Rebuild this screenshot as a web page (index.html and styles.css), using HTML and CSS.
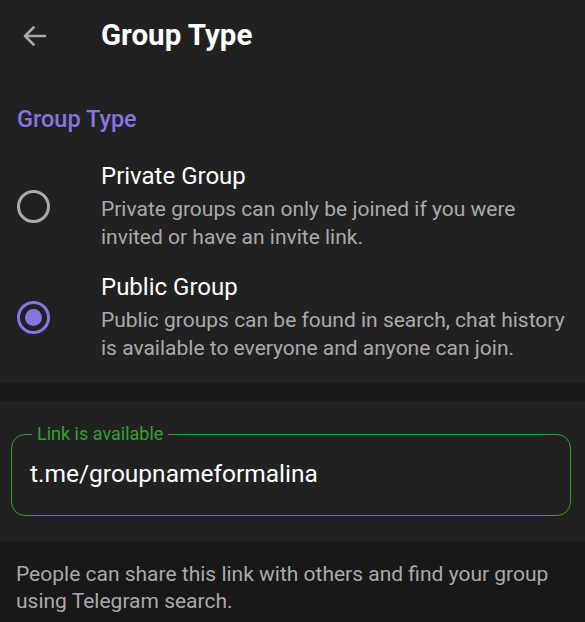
FILE: index.html
```html
<!DOCTYPE html>
<html>
<head>
<meta charset="utf-8">
<link rel="stylesheet" href="styles.css">
</head>
<body>
<div class="page">
  <header class="topbar">
    <span class="back">
      <svg width="26" height="24" viewBox="0 0 26 24"><path d="M24 12H4M12.5 3.5L4 12l8.5 8.5" fill="none" stroke="#aaaaaa" stroke-width="2.6" stroke-linecap="round" stroke-linejoin="round"/></svg>
    </span>
    <h1 class="title">Group Type</h1>
  </header>
  <section class="types">
    <h2 class="section-title">Group Type</h2>
    <div class="option">
      <span class="radio"></span>
      <div class="option-text">
        <div class="option-title">Private Group</div>
        <div class="option-desc">Private groups can only be joined if you were invited or have an invite link.</div>
      </div>
    </div>
    <div class="option">
      <span class="radio checked"></span>
      <div class="option-text">
        <div class="option-title">Public Group</div>
        <div class="option-desc">Public groups can be found in search, chat history is available to everyone and anyone can join.</div>
      </div>
    </div>
  </section>
  <div class="gap"></div>
  <section class="link">
    <fieldset class="field">
      <legend class="field-label">Link is available</legend>
      <div class="field-value">t.me/groupnameformalina</div>
    </fieldset>
  </section>
  <footer class="hint">People can share this link with others and find your group using Telegram search.</footer>
</div>
</body>
</html>
```
FILE: styles.css
```css
html, body {
  margin: 0;
  padding: 0;
  background: #181818;
}
body {
  font-family: Roboto, "Noto Sans", sans-serif;
  color: #ffffff;
}
.page {
  width: 585px;
  height: 622px;
  overflow: hidden;
  display: flex;
  flex-direction: column;
}
.topbar {
  display: flex;
  align-items: center;
  height: 72px;
  flex: none;
  background: #212121;
}
.back {
  display: flex;
  width: 26px;
  height: 24px;
  margin-left: 21px;
}
.title {
  margin: 0 0 0 54px;
  font-size: 29.5px;
  font-weight: 700;
  line-height: 1;
}
.types {
  flex: none;
  background: #212121;
  padding: 32px 0 11px;
}
.section-title {
  margin: 0 0 16px 17px;
  font-size: 23.5px;
  font-weight: 500;
  color: #8774e1;
  line-height: 30px;
}
.option {
  display: flex;
  align-items: center;
  padding: 11px 0 10px;
}
.radio {
  box-sizing: border-box;
  width: 33px;
  height: 33px;
  margin-left: 17px;
  border: 3px solid #aaaaaa;
  border-radius: 50%;
  flex: none;
  display: flex;
  align-items: center;
  justify-content: center;
}
.radio.checked {
  border-color: #8774e1;
}
.radio.checked::after {
  content: "";
  width: 17px;
  height: 17px;
  border-radius: 50%;
  background: #8774e1;
}
.option-text {
  margin-left: 51px;
  padding-right: 16px;
}
.option-title {
  font-size: 24px;
  line-height: 30px;
  color: #ffffff;
}
.option-desc {
  font-size: 21px;
  line-height: 27.5px;
  color: #aaaaaa;
  margin-top: 5px;
}
.gap {
  flex: none;
  height: 18px;
  background: #181818;
}
.link {
  flex: none;
  background: #212121;
  padding: 23px 14px 25px 11px;
}
.field {
  margin: 0;
  padding: 0 0 25px 18px;
  border: 1.3px solid #2ea42e;
  border-radius: 14px;
}
.field-label {
  margin-left: 2px;
  padding: 0 5px;
  font-size: 18px;
  line-height: 20px;
  color: #2ea42e;
}
.field-value {
  font-size: 24.5px;
  line-height: 32px;
  color: #ffffff;
  margin-top: 14px;
}
.hint {
  background: #181818;
  padding: 20px 16px 19px;
  font-size: 21px;
  line-height: 27px;
  color: #aaaaaa;
}
```
